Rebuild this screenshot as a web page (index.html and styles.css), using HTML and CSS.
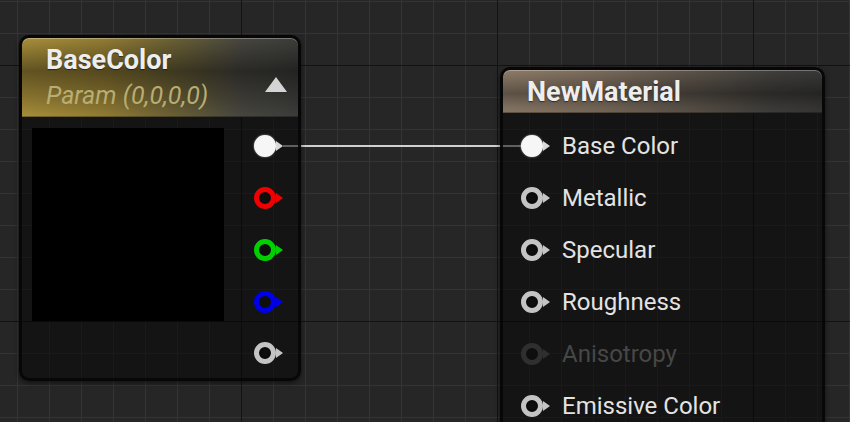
FILE: index.html
```html
<!DOCTYPE html>
<html>
<head>
<meta charset="utf-8">
<link rel="stylesheet" href="styles.css">
</head>
<body>
<div class="canvas">
  <svg class="wire" width="850" height="422" viewBox="0 0 850 422">
    <line x1="283" y1="146" x2="522" y2="146" stroke="#cfcfcf" stroke-width="2"/>
  </svg>

  <div class="node node-param">
    <div class="node-header header-param">
      <div class="titles">
        <div class="title">BaseColor</div>
        <div class="subtitle">Param (0,0,0,0)</div>
      </div>
      <span class="collapse"></span>
    </div>
    <div class="node-body param-body">
      <div class="preview"></div>
      <div class="out-pins">
        <div class="out-row"><span class="pin pin-white"><span class="ring"></span></span></div>
        <div class="out-row"><span class="pin pin-red"><span class="ring"></span></span></div>
        <div class="out-row"><span class="pin pin-green"><span class="ring"></span></span></div>
        <div class="out-row"><span class="pin pin-blue"><span class="ring"></span></span></div>
        <div class="out-row"><span class="pin pin-gray"><span class="ring"></span></span></div>
      </div>
    </div>
  </div>

  <div class="node node-material">
    <div class="node-header header-material">
      <div class="title">NewMaterial</div>
    </div>
    <div class="node-body material-body">
      <div class="in-row"><span class="pin pin-white"><span class="ring"></span></span><span class="label">Base Color</span></div>
      <div class="in-row"><span class="pin pin-gray"><span class="ring"></span></span><span class="label">Metallic</span></div>
      <div class="in-row"><span class="pin pin-gray"><span class="ring"></span></span><span class="label">Specular</span></div>
      <div class="in-row"><span class="pin pin-gray"><span class="ring"></span></span><span class="label">Roughness</span></div>
      <div class="in-row disabled"><span class="pin pin-dim"><span class="ring"></span></span><span class="label">Anisotropy</span></div>
      <div class="in-row"><span class="pin pin-gray"><span class="ring"></span></span><span class="label">Emissive Color</span></div>
    </div>
  </div>
</div>
</body>
</html>
```

FILE: styles.css
```css
html, body {
  margin: 0;
  padding: 0;
}

body {
  width: 850px;
  height: 422px;
  overflow: hidden;
  font-family: Roboto, "Noto Sans", sans-serif;
}

.canvas {
  position: relative;
  width: 850px;
  height: 422px;
  overflow: hidden;
  background-color: #262626;
  background-image:
    linear-gradient(to right, #131313 1px, transparent 1px),
    linear-gradient(to bottom, #131313 1px, transparent 1px),
    linear-gradient(to right, #343434 1px, transparent 1px),
    linear-gradient(to bottom, #343434 1px, transparent 1px);
  background-size: 256px 256px, 256px 256px, 32px 32px, 32px 32px;
  background-position: 241px 65px, 241px 65px, 17px 1px, 17px 1px;
}

.wire {
  position: absolute;
  left: 0;
  top: 0;
}

/* ---------- nodes ---------- */
.node {
  position: absolute;
  box-sizing: border-box;
  border: 3px solid rgba(6, 7, 6, 0.92);
  border-radius: 10px;
  background: rgba(4, 6, 4, 0.55);
  box-shadow: 0 2px 5px rgba(0, 0, 0, 0.55);
}

.node-param {
  left: 19px;
  top: 35px;
  width: 282px;
}

.node-material {
  left: 500px;
  top: 67px;
  width: 325px;
  height: 420px;
}

.node-header {
  box-sizing: border-box;
  border-radius: 7px 7px 0 0;
  box-shadow: inset 0 1px 0 rgba(255, 255, 255, 0.3), inset 0 -1px 0 rgba(0, 0, 0, 0.3);
}

.header-param {
  height: 79px;
  padding: 8px 11px 0 24px;
  display: flex;
  justify-content: space-between;
  align-items: flex-start;
  background:
    linear-gradient(to bottom, rgba(0, 0, 0, 0) 0%, rgba(0, 0, 0, 0.42) 42%, rgba(0, 0, 0, 0.2) 75%, rgba(0, 0, 0, 0) 100%),
    linear-gradient(to right, #a88f3a 0%, #927c34 30%, #6a6035 55%, #474640 80%, #3c3d3a 100%);
}

.header-material {
  height: 43px;
  padding: 8px 0 0 24px;
  background:
    linear-gradient(to bottom, rgba(0, 0, 0, 0) 0%, rgba(0, 0, 0, 0.35) 55%, rgba(0, 0, 0, 0.12) 85%, rgba(0, 0, 0, 0.05) 100%),
    linear-gradient(to right, #8f7d6a 0%, #7b6c5c 30%, #5a5249 60%, #3f3e3b 85%, #383836 100%);
}

.title {
  font-size: 27px;
  line-height: 28px;
  font-weight: 700;
  color: #eeeeee;
  text-shadow: 0 1px 1px rgba(0, 0, 0, 0.5);
  white-space: nowrap;
}

.subtitle {
  margin-top: 8px;
  font-size: 25px;
  line-height: 28px;
  font-style: italic;
  color: #b9ad72;
  white-space: nowrap;
}

.collapse {
  margin-top: 31px;
  width: 0;
  height: 0;
  border-left: 11px solid transparent;
  border-right: 11px solid transparent;
  border-bottom: 15px solid #d4d4d4;
}

/* ---------- param body ---------- */
.param-body {
  display: flex;
  align-items: flex-start;
  padding: 3px 14px 0 10px;
}

.preview {
  width: 192px;
  height: 193px;
  margin-top: 8px;
  background: #000;
}

.out-pins {
  margin-left: auto;
  display: flex;
  flex-direction: column;
}

.out-row {
  height: 52px;
  display: flex;
  align-items: center;
}

.out-row:last-child {
  height: 50px;
}

/* ---------- material body ---------- */
.material-body {
  padding: 7px 0 0 18px;
}

.in-row {
  height: 52px;
  display: flex;
  align-items: center;
}

.label {
  margin-left: 11px;
  font-size: 24px;
  color: #e3e3e3;
  white-space: nowrap;
}

.in-row.disabled .label {
  color: #474747;
}

/* ---------- pins ---------- */
.pin {
  display: flex;
  align-items: center;
  width: 30px;
  height: 22px;
}

.pin .ring {
  box-sizing: border-box;
  width: 22px;
  height: 22px;
  border-radius: 50%;
  border: 5px solid currentColor;
  background: #0d0e0d;
  filter: blur(0.7px);
}

.pin::after {
  content: "";
  margin-left: 0;
  width: 0;
  height: 0;
  border-top: 5px solid transparent;
  border-bottom: 5px solid transparent;
  border-left: 7px solid currentColor;
}

.pin-white {
  color: #d8d8d8;
}

.pin-white .ring {
  border-color: #f6f6f6;
  background: #f6f6f6;
  box-shadow: 0 0 2px rgba(255, 255, 255, 0.6);
}

.pin-red { color: #f00000; }
.pin-green { color: #00d000; }
.pin-blue { color: #0000e6; }

.pin-gray {
  color: #c6c6c6;
}

.pin-gray .ring {
  border-color: #c4c4c4;
  box-shadow: inset 0 0 3px rgba(0, 0, 0, 0.9);
}

.pin-dim {
  color: #2f2f2f;
}
```
